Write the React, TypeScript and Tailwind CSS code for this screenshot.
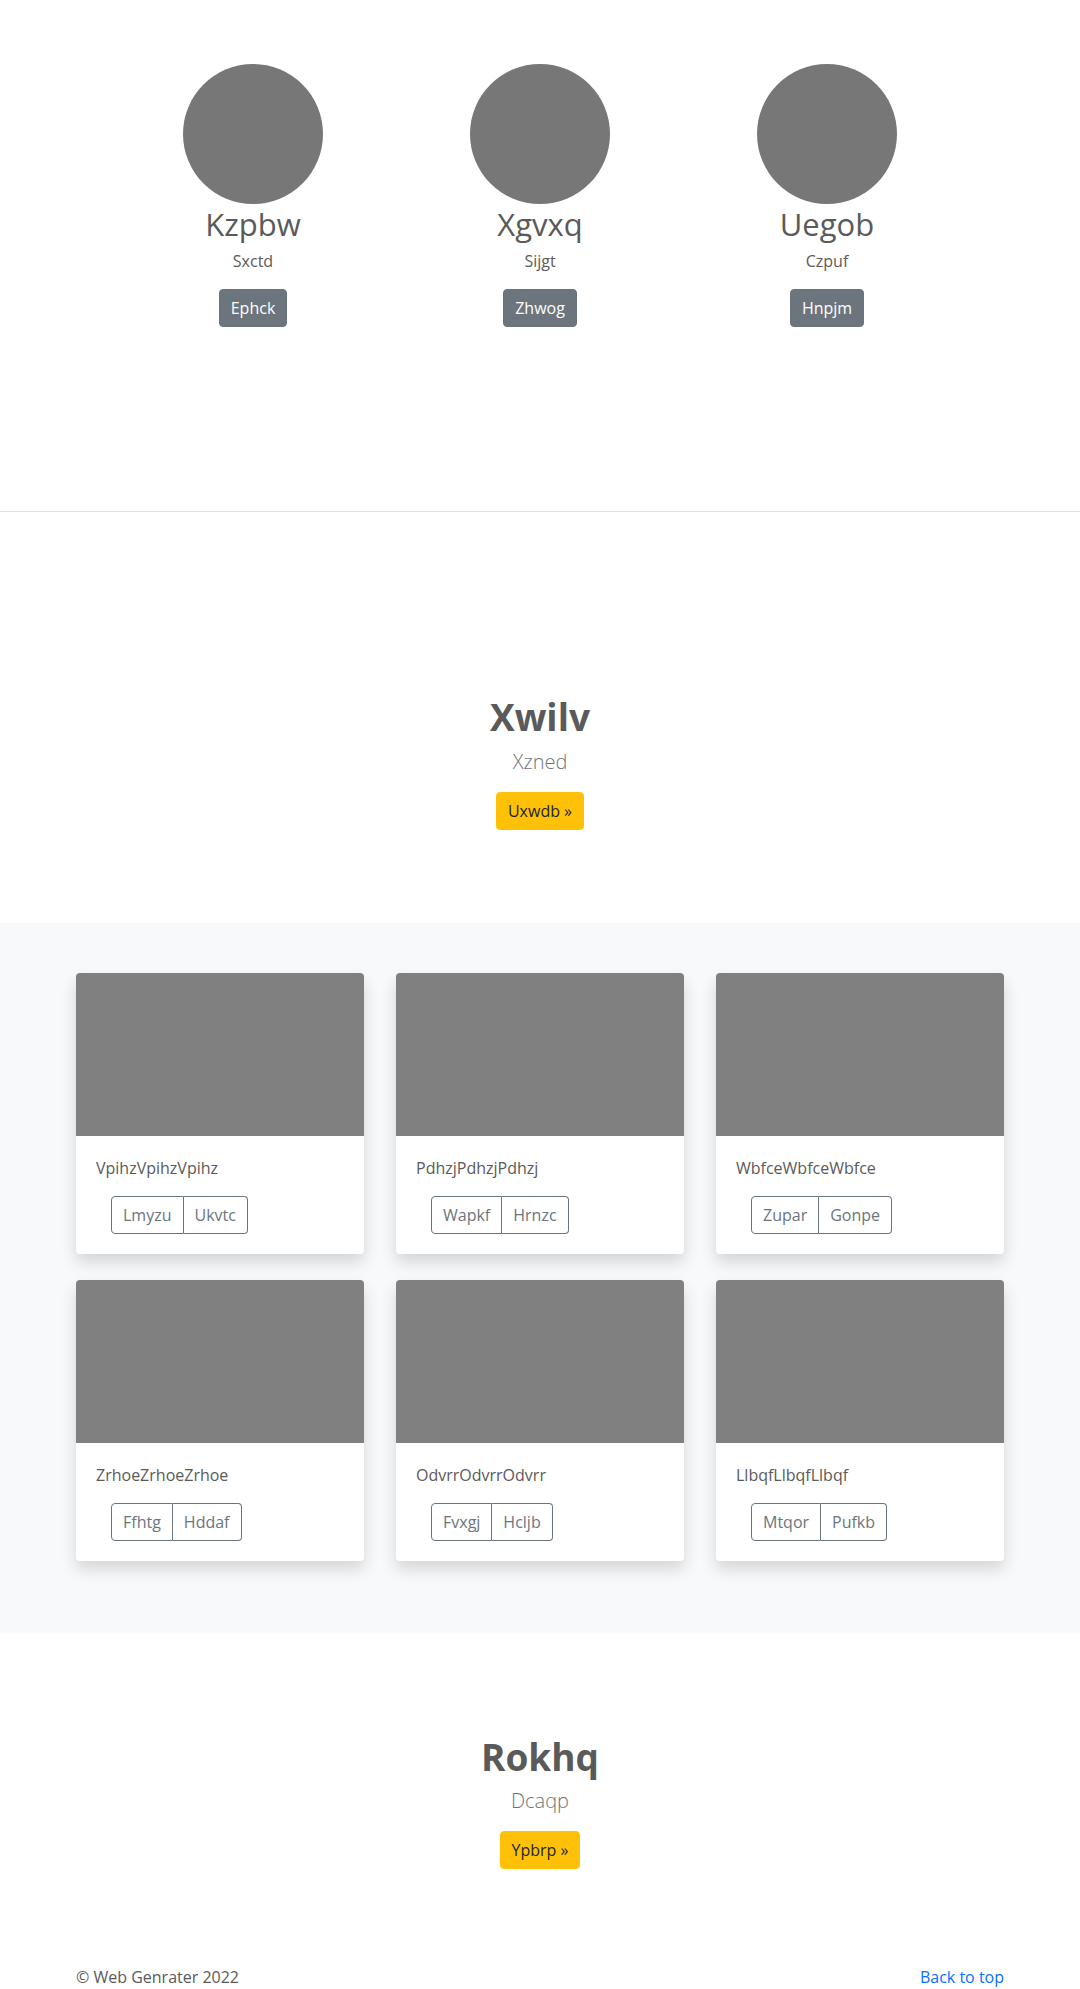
const people = [
  { name: 'Kzpbw', role: 'Sxctd', action: 'Ephck' },
  { name: 'Xgvxq', role: 'Sijgt', action: 'Zhwog' },
  { name: 'Uegob', role: 'Czpuf', action: 'Hnpjm' },
]

const cards = [
  { title: 'VpihzVpihzVpihz', a: 'Lmyzu', b: 'Ukvtc' },
  { title: 'PdhzjPdhzjPdhzj', a: 'Wapkf', b: 'Hrnzc' },
  { title: 'WbfceWbfceWbfce', a: 'Zupar', b: 'Gonpe' },
  { title: 'ZrhoeZrhoeZrhoe', a: 'Ffhtg', b: 'Hddaf' },
  { title: 'OdvrrOdvrrOdvrr', a: 'Fvxgj', b: 'Hcljb' },
  { title: 'LlbqfLlbqfLlbqf', a: 'Mtqor', b: 'Pufkb' },
]

function Hero({ title, lead, action, pad }: { title: string; lead: string; action: string; pad: string }) {
  return (
    <section className={`${pad} text-center`}>
      <h1 className="pt-[5px] text-[37px] leading-[1.2] font-bold mb-[7px]">{title}</h1>
      <p className="text-xl leading-[1.5] font-light text-[#6c757d] mb-[15px]">{lead}</p>
      <a href="#" className="inline-block bg-[#ffc107] border border-[#ffc107] text-[#212529] px-[11px] py-1.5 leading-6 rounded">
        {action} &raquo;
      </a>
    </section>
  )
}

export default function App() {
  return (
    <div className="min-h-screen bg-white text-[#5a5a5a] font-['Open_Sans','Noto_Sans',sans-serif] text-base">
      {/* Marketing */}
      <section className="pt-16">
        <div className="grid grid-cols-3 w-[861px] mx-auto">
          {people.map((p) => (
            <div key={p.name} className="flex flex-col items-center text-center">
              <div className="w-[140px] h-[140px] rounded-full bg-[#777777]" />
              <h2 className="pt-[2px] text-[31px] leading-[1.2] font-normal mb-[6px]">{p.name}</h2>
              <p className="leading-6 mb-4">{p.role}</p>
              <a href="#" className="inline-block bg-[#6c757d] border border-[#6c757d] text-white px-[11px] py-1.5 leading-6 rounded">
                {p.action}
              </a>
            </div>
          ))}
        </div>
      </section>

      <hr className="mt-[184px] border-0 border-t border-[#e0e0e0]" />

      <Hero title="Xwilv" lead="Xzned" action="Uxwdb" pad="pt-[178px] pb-[93px]" />

      {/* Album */}
      <section className="bg-[#f8f9fa] pt-[50px] pb-[72px]">
        <div className="grid grid-cols-3 gap-x-8 gap-y-[26px] w-[928px] mx-auto">
          {cards.map((c) => (
            <div key={c.title} className="bg-white rounded overflow-hidden shadow-[0_8px_16px_rgba(0,0,0,0.15)]">
              <div className="h-[163px] bg-[#808080]" />
              <div className="p-5">
                <p className="leading-6 mb-4">{c.title}</p>
                <div className="inline-flex ml-[15px] text-[#6c757d]">
                  <button className="border border-[#6c757d] rounded-l px-[11px] py-1.5 leading-6">{c.a}</button>
                  <button className="border border-l-0 border-[#6c757d] rounded-r px-[11px] py-1.5 leading-6">{c.b}</button>
                </div>
              </div>
            </div>
          ))}
        </div>
      </section>

      <Hero title="Rokhq" lead="Dcaqp" action="Ypbrp" pad="pt-[97px] pb-[96px]" />

      <footer className="w-[928px] mx-auto flex justify-between leading-6">
        <p>&copy; Web Genrater 2022</p>
        <a href="#" className="text-[#0d6efd]">Back to top</a>
      </footer>
    </div>
  )
}
